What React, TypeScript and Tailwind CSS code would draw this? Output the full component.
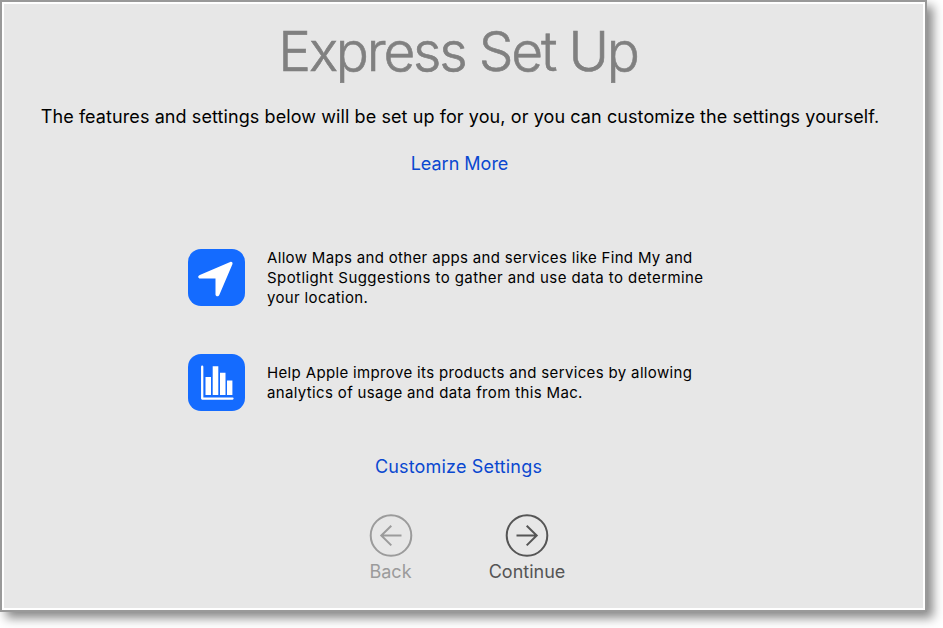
import type { ReactNode } from "react";

function Feature({ icon, children }: { icon: ReactNode; children: ReactNode }) {
  return (
    <li className="flex h-[60px] items-center gap-[22px]">
      <span className="-mt-[2px] block size-[57px] shrink-0 rounded-[13px] bg-[#146bff]">{icon}</span>
      <p className="flex flex-col whitespace-nowrap text-[15px] leading-5 tracking-[0.35px]">{children}</p>
    </li>
  );
}

function LocationIcon() {
  return (
    <svg viewBox="0 0 57 57" className="size-[57px]" fill="white">
      <path d="M42.200 13c1.500-.6 2.900.6 2.200 2.200L31.300 45.900c-.8 2-3.800 1.600-3.800-.5V29.500H12.200c-2.400 0-2.700-2.700-.4-3.500Z" />
    </svg>
  );
}

function ChartIcon() {
  return (
    <svg viewBox="0 0 57 57" className="size-[57px]" fill="white">
      <path d="M14.200 12.700V44.600H44.500" fill="none" stroke="white" strokeWidth="2.300" strokeLinecap="round" strokeLinejoin="round" />
      <path d="M17.500 23h5.500v18h-5.500ZM24.700 12.200h5.600V41h-5.600ZM32 18.800h5.500V41H32ZM39 26.500h5.400V41H39Z" />
    </svg>
  );
}

function NavButton({ label, forward, className }: { label: string; forward?: boolean; className: string }) {
  return (
    <button className={`flex flex-col items-center ${className}`}>
      <svg viewBox="0 0 44 44" className="size-[44px]" fill="none" stroke="currentColor" strokeWidth="2">
        <circle cx="22" cy="22.500" r="20.300" />
        <path d={forward ? "M11.500 22.500H32M21.700 12.800 31.700 22.500 21.700 32.400" : "M32.500 22.500H12M22.300 12.800 12.300 22.500 22.300 32.400"} />
      </svg>
      <span className="mt-[3px] text-[18px] leading-6">{label}</span>
    </button>
  );
}

export default function App() {
  return (
    <div className="h-[628px] w-[943px] overflow-hidden bg-white font-['Inter',sans-serif] text-black">
      <div className="h-[612px] w-[927px] border-2 border-[#999] bg-white p-[2px] shadow-[6px_6px_10px_#888]">
        <main className="flex h-full flex-col items-center bg-[#e7e7e7] pr-[7px]">
          <h1 className="mt-[13px] h-[68px] whitespace-nowrap pr-[4px] text-[55px] font-light leading-[68px] tracking-[-2.2px] text-[#808080] [-webkit-text-stroke:0.6px_#808080]">Express Set Up</h1>
          <p className="mt-[20px] h-6 whitespace-nowrap text-[18px] leading-6 tracking-[0.09px]">The features and settings below will be set up for you, or you can customize the settings yourself.</p>
          <a className="mt-[23px] h-6 pr-px text-[18px] leading-6 text-[#0a48d0]">Learn More</a>
          <ul className="ml-[184px] mt-[72px] flex flex-col gap-[45px] self-start">
            <Feature icon={<LocationIcon />}>
              <span className="tracking-[0.33px]">Allow Maps and other apps and services like Find My and</span>
              <span className="tracking-[0.42px]">Spotlight Suggestions to gather and use data to determine</span>
              <span>your location.</span>
            </Feature>
            <Feature icon={<ChartIcon />}>
              <span>Help Apple improve its products and services by allowing</span>
              <span>analytics of usage and data from this Mac.</span>
            </Feature>
          </ul>
          <a className="mt-[42px] h-6 pr-[3px] text-[18px] leading-6 tracking-[0.17px] text-[#0a48d0]">Customize Settings</a>
          <nav className="mt-[34px] flex gap-[54px]">
            <NavButton label="Back" className="w-[80px] text-[#9b9b9b]" />
            <NavButton label="Continue" forward className="w-[85px] text-[#555]" />
          </nav>
        </main>
      </div>
    </div>
  );
}
